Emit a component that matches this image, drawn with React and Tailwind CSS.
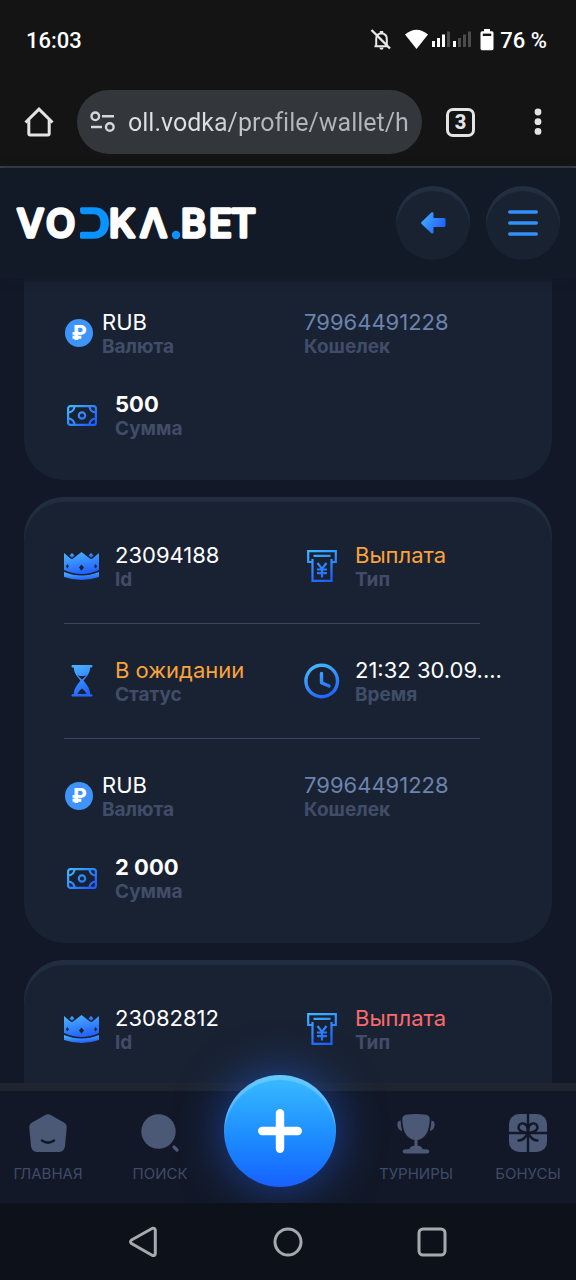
import React from "react";

function Gradient({ id }) {
  return (
    <defs>
      <linearGradient id={id} x1="0" y1="0" x2="0.35" y2="1">
        <stop offset="0" stopColor="#4db8ff" />
        <stop offset="1" stopColor="#2465ff" />
      </linearGradient>
    </defs>
  );
}

function CrownIcon() {
  return (
    <svg width="36" height="28" viewBox="0 0 36 28" aria-hidden="true">
      <Gradient id="crown" />
      <g fill="url(#crown)">
        <path d="M0 1L6.5 6.5Q8 7.5 9.8 6L17.5 0L25.2 6Q27 7.5 28.5 6.5L35 1V18Q26 22 17.5 22Q9 22 0 18Z" />
        <path d="M0 20Q9 23.6 17.5 23.6Q26 23.6 35 20V25Q26 28 17.5 28Q9 28 0 25Z" />
        <path d="M8 1L10.5 3.4L8 5.8L5.5 3.4ZM27 1L29.5 3.4L27 5.8L24.5 3.4Z" />
      </g>
      <path d="M17.5 12.5L20 15.6L17.5 18.8L15 15.6ZM3.3 12L4.9 14.2L3.3 16.4L2 14.2ZM31.7 12L33 14.2L31.7 16.4L30.1 14.2Z" fill="#192232" />
    </svg>
  );
}

function PayoutIcon() {
  return (
    <svg width="30" height="32" viewBox="0 0 30 32" fill="none" stroke="url(#payout)" strokeWidth="2.2" aria-hidden="true">
      <defs>
        <linearGradient id="payout" gradientUnits="userSpaceOnUse" x1="4" y1="0" x2="18" y2="32">
          <stop offset="0" stopColor="#3fb6ff" />
          <stop offset="1" stopColor="#1f5fff" />
        </linearGradient>
      </defs>
      <path d="M5.5 12H1.2V1.2H28.8V12H24.5M5.5 9V30.8H24.5V9M6.5 5.8H23.5" />
      <path d="M10.5 13L15 18.8L19.5 13M15 18.8V27.5M10 19.5H20M10 23.2H20" />
    </svg>
  );
}

function HourglassIcon() {
  return (
    <svg width="24" height="32" viewBox="0 0 24 32" aria-hidden="true">
      <Gradient id="hourglass" />
      <g fill="url(#hourglass)">
        <path d="M2 0H22Q23.2 1.2 22 2.4H20.2C20 9 15.5 12.5 13.6 15.5C15.5 18.5 20 22.5 20.2 29.2H22Q23.2 30.4 22 31.6H2Q.8 30.4 2 29.2H3.8C4 22.5 8.5 18.5 10.4 15.5C8.5 12.5 4 9 3.8 2.4H2Q.8 1.2 2 0Z" />
      </g>
      <path d="M12 23.5Q15.5 26 16.6 29H7.4Q8.5 26 12 23.5ZM7.4 10.2Q12 12 16.6 10.2Q14 12.8 12 14.5Q10 12.8 7.4 10.2Z" fill="#192232" />
    </svg>
  );
}

function ClockIcon() {
  return (
    <svg width="36" height="36" viewBox="0 0 36 36" fill="none" stroke="url(#clock)" strokeWidth="3.4" strokeLinecap="round" strokeLinejoin="round" aria-hidden="true">
      <defs>
        <linearGradient id="clock" gradientUnits="userSpaceOnUse" x1="8" y1="0" x2="24" y2="36">
          <stop offset="0" stopColor="#48bcff" />
          <stop offset="1" stopColor="#1f5fff" />
        </linearGradient>
      </defs>
      <circle cx="17.7" cy="18" r="15.8" />
      <path d="M17.5 10.5V19.8L25 23" />
    </svg>
  );
}

function BanknoteIcon() {
  return (
    <svg width="30" height="21" viewBox="0 0 30 21" fill="none" stroke="url(#note)" strokeWidth="2.2" aria-hidden="true">
      <defs>
        <linearGradient id="note" gradientUnits="userSpaceOnUse" x1="4" y1="0" x2="22" y2="21">
          <stop offset="0" stopColor="#3fb6ff" />
          <stop offset="1" stopColor="#1f5fff" />
        </linearGradient>
      </defs>
      <rect x="1.1" y="1.1" width="27.8" height="18.8" rx="2.5" />
      <circle cx="15" cy="10.5" r="3.2" />
      <path d="M7.5 1.5Q7 6.8 1.5 7.5M22.5 1.5Q23 6.8 28.5 7.5M1.5 13.5Q7 14.2 7.5 19.5M28.5 13.5Q23 14.2 22.5 19.5" />
    </svg>
  );
}

function Entry({ icon, value, label, tone = "text-white" }) {
  return (
    <div className="flex min-w-0 items-center gap-[15px]">
      {icon && <span className="flex w-9 shrink-0 justify-center">{icon}</span>}
      <div className="min-w-0">
        <div className={"whitespace-nowrap text-[22px] leading-7 " + tone}>{value}</div>
        <div className="text-[19px] leading-[22px] font-bold text-[#414d68]">{label}</div>
      </div>
    </div>
  );
}

function Row({ children }) {
  return <div className="grid grid-cols-2 gap-8">{children}</div>;
}

function Divider() {
  return <hr className="my-8 mr-8 border-t border-[#38445e]" />;
}

function IdentityRow({ id, type, tone }) {
  return (
    <Row>
      <Entry icon={<CrownIcon />} value={id} label="Id" />
      <Entry icon={<PayoutIcon />} value={type} label="Тип" tone={tone} />
    </Row>
  );
}

function MoneyRows({ amount }) {
  return (
    <>
      <Row>
        <div className="flex items-center gap-2">
          <span className="flex w-[30px] shrink-0 justify-center">
            <span className="flex size-7 items-center justify-center rounded-full bg-[#3f94fb] text-xl leading-none font-extrabold text-white">₽</span>
          </span>
          <Entry value="RUB" label="Валюта" />
        </div>
        <Entry value="79964491228" label="Кошелек" tone="text-[#6b83ad]" />
      </Row>
      <div className="mt-8">
        <Entry icon={<BanknoteIcon />} value={amount} label="Сумма" tone="font-bold text-white" />
      </div>
    </>
  );
}

function Logo() {
  return (
    <svg width="244" height="50" viewBox="0 0 244 50" role="img" aria-label="VODKA.BET">
      <g fill="#fff" stroke="#fff" strokeWidth="3.4" strokeLinejoin="round" fontFamily="Inter, sans-serif" fontSize="38" fontWeight="500">
        <text x="1" y="39">V</text>
        <text x="30" y="39">O</text>
        <text x="93" y="39">K</text>
        <text x="124" y="39">Λ</text>
        <text x="165" y="39">B</text>
        <text x="193" y="39">E</text>
        <text x="215" y="39">T</text>
      </g>
      <path d="M65.5 9.3H78C87 9.3 93 15.5 93 25S87 40.7 78 40.7H65.5Q64 40.7 64 39.2V35.2Q64 33.7 65.5 33.7H78C82 33.7 84.5 30.5 84.5 25S82 16.3 78 16.3H67.5Q64 16.3 64 12.8V10.8Q64 9.3 65.5 9.3Z" fill="#0a93ff" />
      <circle cx="160" cy="37" r="4.2" fill="#0a93ff" />
    </svg>
  );
}

function StatusBar() {
  return (
    <div className="flex h-[78px] items-center justify-between px-[26px] pt-[2px] pr-[29px] font-[Roboto,sans-serif] text-[22px] font-medium text-white">
      <span>16:03</span>
      <div className="flex items-center">
        <svg width="106" height="24" viewBox="0 0 106 24" aria-label="Звук выключен, Wi-Fi, сотовая сеть" role="img">
          <g fill="none" stroke="#e8e8e8" strokeWidth="2">
            <path d="M4.5 18.3H18M6.2 18V11Q6.2 6 11.5 5.3Q16.8 6 16.8 11V18" />
            <path d="M1.5 2L20 20.5" strokeWidth="2.4" />
          </g>
          <path d="M9.8 3H13.2V6H9.8ZM9.3 19.5H13.7Q13.3 21.8 11.5 21.8Q9.7 21.8 9.3 19.5Z" fill="#e8e8e8" />
          <path d="M35 6.5Q46.5-3 58 6.5L46.5 21Z" fill="#fff" />
          <path d="M62 13H65V19H62ZM67 10H70V19H67ZM72 6.5H75V19H72ZM83 13H86V19H83Z" fill="#fff" />
          <path d="M77 3.5H80V19H77ZM88 10H91V19H88ZM93 6.5H96V19H93ZM98 3.5H101V19H98Z" fill="#4c4c4c" />
        </svg>
        <svg className="mr-[6px] ml-1" width="14" height="22" viewBox="0 0 14 22" aria-hidden="true">
          <path d="M4 0H10V2.3H12Q13.5 2.3 13.5 4V19.5Q13.5 21.3 12 21.3H2Q.5 21.3 .5 19.5V4Q.5 2.3 2 2.3H4Z" fill="#fff" />
          <path d="M2.8 4.6H11.2V7H2.8Z" fill="#141414" />
        </svg>
        <span>76 %</span>
      </div>
    </div>
  );
}

function BrowserBar() {
  return (
    <div className="flex h-[88px] items-center">
      <button aria-label="Домой" className="flex w-[77px] shrink-0 justify-center">
        <svg width="30" height="30" viewBox="0 0 30 30" fill="none" stroke="#e4e4e4" strokeWidth="3" aria-hidden="true">
          <path d="M1.5 15.5L15 2.2L28.5 15.5" />
          <path d="M4.8 13V26.5Q4.8 28 6.3 28H23.7Q25.2 28 25.2 26.5V13" />
        </svg>
      </button>
      <label className="flex h-16 min-w-0 flex-1 items-center gap-3 rounded-full bg-[#33363a] pr-3 pl-[13px]">
        <svg className="shrink-0" width="26" height="22" viewBox="0 0 26 22" fill="none" stroke="#d5d7d9" strokeWidth="2.4" aria-hidden="true">
          <circle cx="5.3" cy="5.3" r="3.8" />
          <path d="M12 5.3H24M1 16H12" />
          <circle cx="19.8" cy="16" r="3.8" />
        </svg>
        <input
          aria-label="Адрес сайта"
          readOnly
          value="oll.vodka/profile/wallet/h"
          className="h-10 w-full min-w-0 bg-linear-to-r from-[#dfe1e3] from-25% to-[#b4b6b8] to-50% bg-clip-text font-[Roboto,sans-serif] text-[25px] text-transparent outline-none [font-variant-ligatures:none]"
        />
      </label>
      <button aria-label="Вкладки" className="flex w-[77px] shrink-0 justify-center">
        <span className="flex size-[29px] items-center justify-center rounded-[7px] border-3 border-[#e4e4e4] font-[Roboto,sans-serif] text-xl leading-none font-extrabold text-[#e4e4e4]">3</span>
      </button>
      <button aria-label="Меню браузера" className="flex w-[77px] shrink-0 justify-center">
        <svg width="8" height="28" viewBox="0 0 8 28" fill="#e4e4e4" aria-hidden="true">
          <circle cx="4" cy="4" r="3.4" />
          <circle cx="4" cy="13.7" r="3.4" />
          <circle cx="4" cy="23.4" r="3.4" />
        </svg>
      </button>
    </div>
  );
}

function RoundButton({ label, children }) {
  return (
    <button aria-label={label} className="flex size-[74px] items-center justify-center rounded-full bg-[#192231] shadow-[inset_0_5px_1px_#222f40]">
      {children}
    </button>
  );
}

function SiteHeader() {
  return (
    <header className="relative z-10 flex h-[110px] items-center justify-between bg-[#121927] px-4 shadow-[0_2px_8px_#121927]">
      <a href="#home"><Logo /></a>
      <div className="flex gap-4">
        <RoundButton label="Назад">
          <svg width="25" height="22" viewBox="0 0 25 22" aria-hidden="true">
            <defs>
              <linearGradient id="back" x1="0" y1="0" x2="1" y2="0.5">
                <stop offset="0" stopColor="#45b5ff" />
                <stop offset="1" stopColor="#2263f8" />
              </linearGradient>
            </defs>
            <path d="M.6 9.9L10.4.6Q12.3-.4 12.5 1.6V6H23Q24.5 6 24.5 7.5V13.5Q24.5 15 23 15H12.5V20Q12.3 22.2 10.4 21.2L.6 12Q-.4 11 .6 9.9Z" fill="url(#back)" />
          </svg>
        </RoundButton>
        <RoundButton label="Меню">
          <svg width="30" height="28" viewBox="0 0 30 28" stroke="#3390f8" strokeWidth="3.4" strokeLinecap="round" aria-hidden="true">
            <path d="M1.7 3H28.3M1.7 14H28.3M1.7 25H28.3" />
          </svg>
        </RoundButton>
      </div>
    </header>
  );
}

function NavItem({ label, children }) {
  return (
    <a href="#nav" className="flex w-24 flex-col items-center gap-2 pt-[23px] text-[15px] leading-6 text-[#3f4b66]">
      <svg width="38" height="40" viewBox="0 0 38 40" fill="#4b5876" aria-hidden="true">{children}</svg>
      <span>{label}</span>
    </a>
  );
}

function BottomNav() {
  return (
    <nav className="relative z-10 flex h-28 bg-[#121827]">
      <div className="flex gap-4">
        <NavItem label="ГЛАВНАЯ">
          <path d="M15.8 1.2Q19-.8 22.2 1.2L34.5 8.3Q38 10.3 37.7 14L36 32Q35.2 38 29.5 38H8.5Q2.8 38 2 32L.3 14Q0 10.3 3.5 8.3Z" />
          <path d="M13 26.5Q19 30.8 25 26.5" fill="none" stroke="#121827" strokeWidth="2.6" strokeLinecap="round" />
        </NavItem>
        <NavItem label="ПОИСК">
          <circle cx="17.5" cy="17.5" r="17.2" />
          <path d="M33 33L36 36" stroke="#4b5876" strokeWidth="3.2" strokeLinecap="round" />
        </NavItem>
      </div>
      <button
        aria-label="Пополнить"
        className="-mt-4 ml-4 flex size-28 shrink-0 items-center justify-center rounded-full bg-linear-to-b from-[#3bbcff] to-[#1a60ff] shadow-[inset_0_5px_1px_rgba(255,255,255,0.22),0_0_48px_rgba(38,98,235,0.6)]"
      >
        <svg width="46" height="46" viewBox="0 0 46 46" stroke="#fff" strokeWidth="8.4" strokeLinecap="round" aria-hidden="true">
          <path d="M23 5.2V40.8M5.2 23H40.8" />
        </svg>
      </button>
      <div className="ml-auto flex gap-4">
        <NavItem label="ТУРНИРЫ">
          <path d="M9 .8Q19-.8 29 .8Q32.8 1.4 32.7 5.5C32.5 17 28.5 24.5 20.5 26V31.5Q24.5 32 25.8 35.3H30Q32.3 35.8 32.3 37.5Q32.3 39.5 30 39.5H8Q5.7 39.5 5.7 37.5Q5.7 35.8 8 35.3H12.2Q13.5 32 17.5 31.5V26C9.5 24.5 5.5 17 5.3 5.5Q5.2 1.4 9 .8Z" />
          <path d="M3.6 6.5Q.3 7 .3 10.5Q.5 15.5 5.2 17.3Q3.8 12 3.6 6.5ZM34.4 6.5Q37.7 7 37.7 10.5Q37.5 15.5 32.8 17.3Q34.2 12 34.4 6.5Z" />
        </NavItem>
        <NavItem label="БОНУСЫ">
          <rect x="0" y="0" width="38" height="38" rx="10" />
          <g fill="none" stroke="#121827" strokeWidth="2.4" strokeLinecap="round">
            <path d="M19 0V38M0 19H38" />
            <path d="M19 18.5C16 18.5 9.5 17.5 9.5 13.5C9.5 10.5 12 9 14.5 9.5C18 10.3 19 15 19 18.5C19 15 20 10.3 23.5 9.5C26 9 28.5 10.5 28.5 13.5C28.5 17.5 22 18.5 19 18.5Q15.5 26.5 9.5 26.5M19 18.5Q22.5 26.5 28.5 26.5" />
          </g>
        </NavItem>
      </div>
    </nav>
  );
}

function SystemNav() {
  return (
    <div className="relative z-20 flex h-[77px] items-center justify-center gap-28 bg-[#0d1119]">
      <button aria-label="Назад в системе">
        <svg width="32" height="32" viewBox="0 0 32 32" fill="none" stroke="#a6a9af" strokeWidth="3" strokeLinejoin="round" aria-hidden="true">
          <path d="M24.5 2.2L3.5 14Q1.5 15.8 3.5 17.5L24.5 29.5Q27 30 27.3 27.5V4.2Q27 1.8 24.5 2.2Z" />
        </svg>
      </button>
      <button aria-label="Главный экран">
        <svg width="32" height="32" viewBox="0 0 32 32" fill="none" stroke="#a6a9af" strokeWidth="3" aria-hidden="true">
          <circle cx="16" cy="16" r="13" />
        </svg>
      </button>
      <button aria-label="Недавние приложения">
        <svg width="32" height="32" viewBox="0 0 32 32" fill="none" stroke="#a6a9af" strokeWidth="3" aria-hidden="true">
          <rect x="3" y="3" width="26" height="26" rx="4" />
        </svg>
      </button>
    </div>
  );
}

export default function App() {
  return (
    <div className="flex h-screen flex-col overflow-hidden bg-[#121827] font-[Inter,sans-serif]">
      <div className="border-b-2 border-[#404448] bg-[#141414]">
        <StatusBar />
        <BrowserBar />
      </div>
      <SiteHeader />
      <main className="flex min-h-0 flex-1 flex-col gap-[17px] overflow-hidden px-6">
        <section className="shrink-0 rounded-b-[40px] bg-[#192232] px-10 pt-[30px] pb-10">
          <MoneyRows amount="500" />
        </section>
        <section className="shrink-0 rounded-[40px] bg-[#192232] px-10 pt-11 pb-10 shadow-[inset_0_5px_1px_#212e40]">
          <IdentityRow id="23094188" type="Выплата" tone="text-[#fba33c]" />
          <Divider />
          <Row>
            <Entry icon={<HourglassIcon />} value="В ожидании" label="Статус" tone="text-[#fba33c]" />
            <Entry icon={<ClockIcon />} value="21:32 30.09...." label="Время" />
          </Row>
          <Divider />
          <MoneyRows amount="2 000" />
        </section>
        <section className="shrink-0 rounded-t-[40px] bg-[#192232] px-10 pt-11 pb-8 shadow-[inset_0_5px_1px_#212e40]">
          <IdentityRow id="23082812" type="Выплата" tone="text-[#fb6a6c]" />
        </section>
      </main>
      <div className="h-2 shrink-0 bg-[#1e2530]" />
      <BottomNav />
      <SystemNav />
    </div>
  );
}
